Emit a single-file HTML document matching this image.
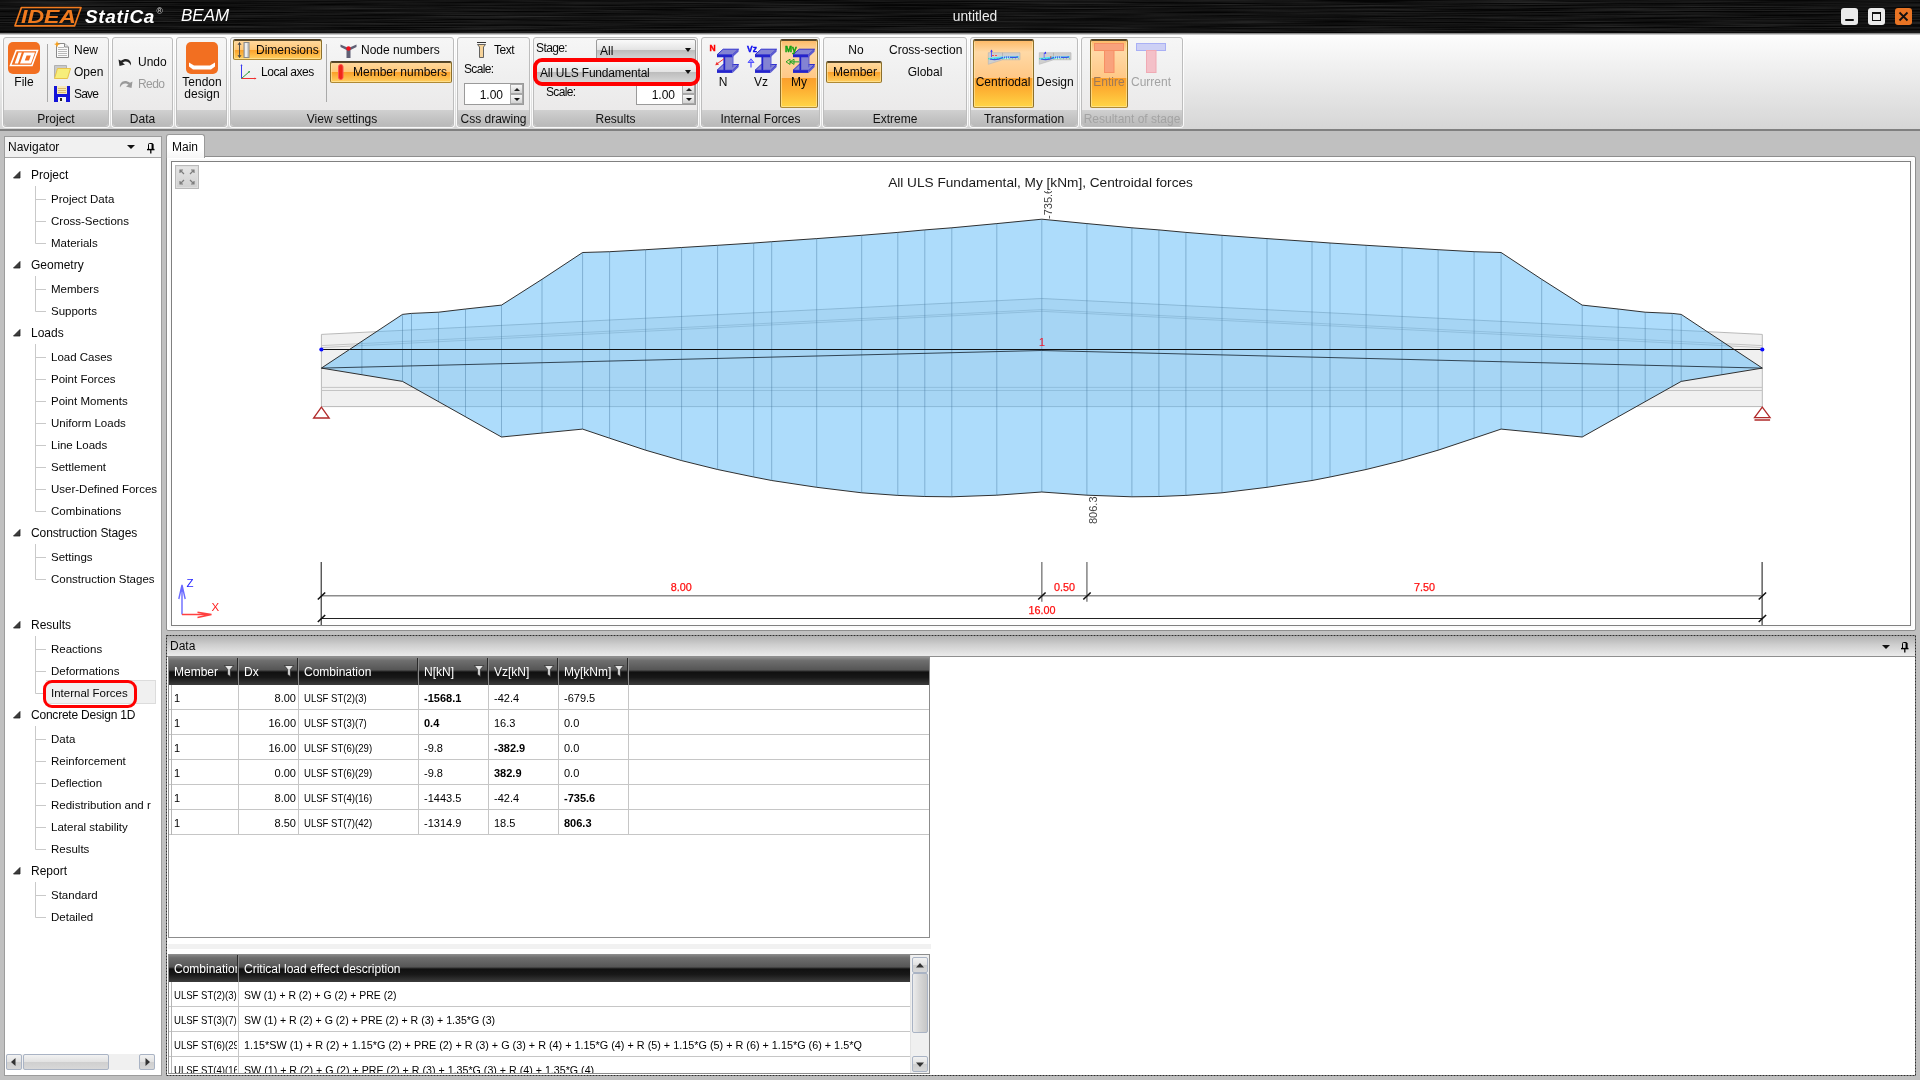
<!DOCTYPE html>
<html lang="en">
<head>
<meta charset="utf-8">
<title>IDEA StatiCa BEAM - untitled</title>
<style>
*{box-sizing:border-box;margin:0;padding:0}
html,body{width:1920px;height:1080px;overflow:hidden}
body{position:relative;background:#c0c0c0;font-family:"Liberation Sans","DejaVu Sans",sans-serif;font-size:12px;color:#080808;line-height:14px}
#root{position:absolute;left:0;top:0;width:1920px;height:1080px;will-change:transform}
.a,.t,.g,.gl,.ob,.sp{position:absolute}
.t{white-space:nowrap;line-height:14px;height:14px}
.c{transform:translateX(-50%)}
svg{position:absolute;overflow:visible}
/* title bar */
#title{position:absolute;left:0;top:0;width:1920px;height:33px;background:#0a0a0a;overflow:hidden}
#ribbon{position:absolute;left:0;top:33px;width:1920px;height:98px;background:linear-gradient(#ffffff 0,#fafafa 8%,#ececec 45%,#dedede 80%,#d6d6d6 100%);border-top:1px solid #8a8a8a;box-shadow:inset 0 1px 0 #c8c8c8;border-bottom:2px solid #808080}
.g{top:37px;height:90px;border:1px solid #bdbdbd;border-radius:3px;background:linear-gradient(#f6f6f6 0,#efefef 45%,#e9e7e7 100%);box-shadow:0 0 0 1px rgba(255,255,255,.85)}
.gl{left:0;right:0;bottom:0;height:16px;padding-top:1px;border-radius:0 0 3px 3px;background:linear-gradient(#d0d0d0,#b9b9b9);text-align:center;font-size:12px;line-height:17px;color:#111;white-space:nowrap}
.ob{border:1px solid;border-color:#4f4126 #8c6f2c #b08a34;border-radius:2px;background:linear-gradient(#ffd9a0 0,#ffc878 50%,#fb9f28 51%,#ffcf60 100%);box-shadow:inset 0 1px 0 #5a4a2a,inset 0 0 0 1px rgba(255,235,170,.6)}
.ob.big{background:linear-gradient(#fdb863 0,#ffd9a6 18%,#ffc886 56%,#fa9f2c 57%,#fdb133 75%,#ffd546 100%)}
.sep{position:absolute;width:1px;background:#a9a9a9}
.combo{position:absolute;border:1px solid #9b9b9b;border-radius:2px;background:linear-gradient(#fafafa 0,#e4e4e4 48%,#bdbdbd 52%,#d9d9d9 100%)}
.arrow{position:absolute;width:0;height:0;border-left:3px solid transparent;border-right:3px solid transparent;border-top:4px solid #111}
.sp{border:1px solid #9a9a9a;background:#fff}
.sb{border:1px solid #a9b3c4;border-radius:2px;background:linear-gradient(#f2f2f2 0,#e2e2e2 48%,#cfcfcf 52%,#d8d8d8 100%)}
.th{background:linear-gradient(#858585 0,#6e6e6e 10%,#565656 44%,#101010 52%,#181818 72%,#3c3c3c 100%)}
.hd{color:#fff}
.nc{font-size:11.500px}
.td{font-size:11px;color:#000}
.sx{transform-origin:0 50%;transform:scaleX(.87)}
.spb{position:absolute;border:1px solid #a8a8a8;background:linear-gradient(#f8f8f8,#d2d2d2)}
</style>
</head>
<body>
<div id="root">
<!-- TITLE BAR -->
<div id="title">
<svg width="1920" height="33" style="left:0;top:0"><defs><filter id="brush" x="0" y="0" width="100%" height="100%"><feTurbulence type="fractalNoise" baseFrequency="0.007 0.8" numOctaves="3" seed="7"/><feColorMatrix type="matrix" values="0 0 0 0 1  0 0 0 0 1  0 0 0 0 1  1.1 0 0 0 -0.3"/></filter></defs><rect width="1920" height="33" fill="#050505"/><rect width="1920" height="33" filter="url(#brush)" opacity=".22"/></svg>
<svg width="70" height="21" viewBox="0 0 70 21" style="left:14px;top:6px"><path d="M7.400 1.500 H67 L60.600 19.800 H1 Z" fill="none" stroke="#f07a1e" stroke-width="1.700" stroke-linejoin="round"/><text x="7" y="17" font-family="Liberation Sans,sans-serif" font-weight="bold" font-style="italic" font-size="17.500" fill="#f07a1e" textLength="55" lengthAdjust="spacingAndGlyphs">IDEA</text></svg>
<span class="t" style="left:85px;top:5.500px;height:22px;line-height:22px;font-size:19px;font-weight:bold;font-style:italic;color:#fff;letter-spacing:.65px">StatiCa</span>
<span class="t" style="left:156.500px;top:7px;font-size:8.500px;line-height:9px;height:9px;color:#ddd">®</span>
<span class="t" style="left:181px;top:6px;height:20px;line-height:20px;font-size:17px;font-style:italic;color:#fff">BEAM</span>
<span class="t c" style="left:975px;top:10px;font-size:13.800px;color:#ededed">untitled</span>
<div class="a" style="left:1841px;top:8px;width:17px;height:17px;border-radius:3px;background:#ebebeb"><div class="a" style="left:4px;top:11px;width:9px;height:2px;background:#111;border-radius:1px"></div></div>
<div class="a" style="left:1868px;top:8px;width:17px;height:17px;border-radius:3px;background:#ebebeb"><div class="a" style="left:4px;top:4px;width:9px;height:9px;border:1px solid #111;border-top-width:2px"></div></div>
<div class="a" style="left:1895px;top:8px;width:17px;height:17px;border-radius:3px;background:#e87424"><svg width="17" height="17" style="left:0;top:0"><path d="M4.5 4.5 L12.5 12.5 M12.5 4.5 L4.5 12.5" stroke="#111" stroke-width="1.8"/></svg></div>
</div>
<!-- RIBBON -->
<div id="ribbon"></div>
<!--RG-START-->
<!-- Project -->
<div class="g" style="left:3px;width:106px"><div class="gl">Project</div></div>
<div class="a" style="left:8px;top:42px;width:32px;height:32px;border-radius:5px;background:#f26f21"><svg width="32" height="32" viewBox="0 0 32 32" style="left:0;top:0"><path d="M8.2 8.5 H29.5 L24 23.5 H2.5 Z" fill="none" stroke="#fff" stroke-width="1.6"/><path d="M10.5 10.5 H13.8 L10 21.5 H6.7 Z" fill="#fff"/><path d="M16 10.500 H27 L23 21.5 H12 Z M18.600 13.500 L16.800 18.500 H21 L22.800 13.500 Z" fill="#fff" fill-rule="evenodd"/></svg></div>
<span class="t c" style="left:24px;top:75px">File</span>
<div class="sep" style="left:47px;top:44px;height:58px"></div>
<svg width="16" height="17" viewBox="0 0 16 17" style="left:54px;top:41px"><path d="M2.5 2.500 H10.500 L14.500 6 V16.500 H2.500 Z" fill="#fbfbfb" stroke="#8a8a8a"/><path d="M10.500 2.500 V6 H14.500" fill="#e8e8e8" stroke="#8a8a8a"/><path d="M4 6.500H10M4 8.500H13M4 10.500H13M4 12.500H13M4 14.500H13" stroke="#b9b9b9"/><path d="M3 0 L4 2.500 L6.500 3 L4 4 L3 6.500 L2 4 L0 3 L2 2.500 Z" fill="#f8a11c"/></svg>
<span class="t" style="left:74px;top:43px">New</span>
<svg width="17" height="14" viewBox="0 0 17 14" style="left:54px;top:65px"><path d="M0.500 0.500 H12.500 V13 H0.500 Z" fill="#c9c9c9" stroke="#b0b0b0"/><path d="M3.500 3.500 H16.500 L13.500 13.500 H0.500 Z" fill="#f7ee7a" stroke="#e8c24a"/></svg>
<span class="t" style="left:74px;top:65px">Open</span>
<svg width="16" height="16" viewBox="0 0 16 16" style="left:54px;top:86px"><path d="M0 0 H16 V16 H0 Z" fill="#1414d8"/><path d="M3 0 H13 V8 H3 Z" fill="#f7e9b8"/><path d="M4 2.500H12M4 4.500H12M4 6.500H12" stroke="#d8b96a"/><path d="M4 11 H12 V16 H4 Z" fill="#f3f3f3"/><path d="M6 12 H8 V15 H6 Z" fill="#222"/></svg>
<span class="t" style="left:74px;top:87px;letter-spacing:-.8px">Save</span>
<!-- Data -->
<div class="g" style="left:112px;width:61px"><div class="gl">Data</div></div>
<svg width="15" height="10" viewBox="0 0 15 10" style="left:118px;top:57px"><path d="M0.500 2.500 L1.500 9 L7 7.500 L4.500 5.800 C7 3.500 11 3.800 13 8.500 C13.800 3 8.500 -0.500 3 3.800 Z" fill="#222"/></svg>
<span class="t" style="left:138px;top:55px">Undo</span>
<svg width="15" height="10" viewBox="0 0 15 10" style="left:118px;top:79px"><path d="M14.500 2.500 L13.500 9 L8 7.500 L10.500 5.800 C8 3.500 4 3.800 2 8.500 C1.200 3 6.500 -0.500 12 3.800 Z" fill="#9a9a9a"/></svg>
<span class="t" style="left:138px;top:77px;color:#9b9b9b;letter-spacing:-.55px">Redo</span>
<!-- Tendon -->
<div class="g" style="left:176px;width:51px"><div class="gl"></div></div>
<div class="a" style="left:186px;top:42px;width:32px;height:32px;border-radius:5px;background:#f26f21"><svg width="32" height="32" viewBox="0 0 32 32" style="left:0;top:0"><path d="M3 20.500 L8 23.500 H24 L29 20.500 L29 24.500 L25 27.500 H7 L3 24.500 Z" fill="#fff"/></svg></div>
<span class="t c" style="left:202px;top:75px">Tendon</span>
<span class="t c" style="left:202px;top:87px">design</span>
<!-- View settings -->
<div class="g" style="left:230px;width:224px"><div class="gl">View settings</div></div>
<div class="ob" style="left:233px;top:39px;width:89px;height:21px"></div>
<svg width="16" height="16" viewBox="0 0 16 16" style="left:238px;top:42px"><path d="M1.500 1 V15 M0 3 L1.500 0.500 L3 3 M0 13 L1.500 15.500 L3 13" stroke="#444" fill="none" stroke-width=".9"/><rect x="6" y="0.500" width="5" height="15" fill="#cfcfcf" stroke="#8c8c8c"/><rect x="7" y="1" width="2" height="14" fill="#eee"/></svg>
<span class="t" style="left:256px;top:43px">Dimensions</span>
<svg width="17" height="16" viewBox="0 0 17 16" style="left:240px;top:64px"><path d="M1.500 1 V14.500" stroke="#3a3af0" stroke-width="1"/><path d="M1.500 14.500 H16" stroke="#f03030" stroke-width="1"/><path d="M1.500 14.500 L9.500 7.500" stroke="#2a9a3a" stroke-width="1"/><path d="M0.500 2 L1.500 0 L2.500 2Z" fill="#3a3af0"/><path d="M14.500 13.500 L16.500 14.500 L14.500 15.500Z" fill="#f03030"/><path d="M8 7.500 L10 7 L9.500 9Z" fill="#2a9a3a"/></svg>
<span class="t" style="left:261px;top:65px;letter-spacing:-.45px">Local axes</span>
<div class="sep" style="left:326px;top:44px;height:58px"></div>
<svg width="17" height="14" viewBox="0 0 17 14" style="left:340px;top:44px"><path d="M0.500 0.500 L8.500 4 L16.500 0.500 V3 L10.500 6 V14 H6.500 V6 L0.500 3 Z" fill="#5f5f74"/><circle cx="8.500" cy="4.500" r="2.200" fill="#f0101a"/></svg>
<span class="t" style="left:361px;top:43px">Node numbers</span>
<div class="ob" style="left:330px;top:61px;width:122px;height:22px"></div>
<svg width="6" height="16" viewBox="0 0 6 16" style="left:338px;top:64px"><rect x="0.500" y="0.500" width="4.500" height="15" rx="2.200" fill="#f02818" stroke="#f55"/></svg>
<span class="t" style="left:353px;top:65px">Member numbers</span>
<!-- Css drawing -->
<div class="g" style="left:457px;width:73px"><div class="gl">Css drawing</div></div>
<svg width="9" height="16" viewBox="0 0 9 16" style="left:477px;top:42px"><path d="M0 0.500 H9" stroke="#333" stroke-width="1"/><path d="M0.500 2.500 H8.500 L6.500 5 V15.500 H2.500 V5 Z" fill="#f6d39a" stroke="#555" stroke-width=".9"/></svg>
<span class="t" style="left:494px;top:43px;letter-spacing:-.5px">Text</span>
<span class="t" style="left:464px;top:62px;letter-spacing:-.65px">Scale:</span>
<div class="sp" style="left:464px;top:83px;width:60px;height:22px"></div>
<span class="t" style="left:464px;top:88px;width:39px;text-align:right">1.00</span>
<div class="spb" style="left:510px;top:84px;width:13px;height:10px"><div class="arrow" style="left:3px;top:3px;border-top:none;border-bottom:3.500px solid #222;border-left-width:3px;border-right-width:3px;margin-left:-.5px"></div></div>
<div class="spb" style="left:510px;top:94px;width:13px;height:10px"><div class="arrow" style="left:2.500px;top:3px;border-top-width:3.500px;border-left-width:3px;border-right-width:3px"></div></div>
<!-- Results -->
<div class="g" style="left:533px;width:165px"><div class="gl">Results</div></div>
<span class="t" style="left:536px;top:41px;letter-spacing:-.6px">Stage:</span>
<div class="combo" style="left:596px;top:39px;width:100px;height:22px"></div>
<span class="t" style="left:600px;top:44px">All</span>
<div class="arrow" style="left:685px;top:48px"></div>
<span class="t" style="left:546px;top:85px;letter-spacing:-.65px">Scale:</span>
<div class="sp" style="left:636px;top:83px;width:60px;height:22px"></div>
<span class="t" style="left:636px;top:88px;width:39px;text-align:right">1.00</span>
<div class="spb" style="left:682px;top:84px;width:13px;height:10px"><div class="arrow" style="left:3px;top:3px;border-top:none;border-bottom:3.500px solid #222;border-left-width:3px;border-right-width:3px;margin-left:-.5px"></div></div>
<div class="spb" style="left:682px;top:94px;width:13px;height:10px"><div class="arrow" style="left:2.500px;top:3px;border-top-width:3.500px;border-left-width:3px;border-right-width:3px"></div></div>
<div class="combo" style="left:535px;top:60px;width:162px;height:24px;border-color:#c4c4c4;border-radius:5px"></div>
<div class="a" style="left:533px;top:58px;width:166.500px;height:27.800px;border:4px solid #f00;border-radius:9px"></div>
<span class="t" style="left:540px;top:66px;letter-spacing:-.2px">All ULS Fundamental</span>
<div class="arrow" style="left:685px;top:70px"></div>
<!-- Internal forces -->
<div class="g" style="left:701px;width:119px"><div class="gl">Internal Forces</div></div>
<div class="ob big" style="left:780px;top:39px;width:38px;height:69px"></div>
<svg width="22" height="24" viewBox="0 0 22 24" style="left:717.1px;top:48.9px"><polygon points="6.14,15.50 21.64,15.50 15.50,21.32 0.00,21.32" fill="#8383d3" stroke="#2323cc" stroke-width=".9" stroke-linejoin="round"/><polygon points="0.00,21.32 15.50,21.32 15.50,23.90 0.00,23.90" fill="#2323cc"/><polygon points="21.64,15.50 21.64,17.96 15.50,23.90 15.50,21.32" fill="#5a5ad0"/><polygon points="6.78,7.75 15.18,7.75 15.18,18.73 6.78,20.99" fill="#8383d3"/><polygon points="6.46,7.75 8.20,7.75 8.20,21.19 6.46,21.19" fill="#2323cc"/><polygon points="15.18,7.75 16.47,6.46 16.47,17.44 15.18,18.73" fill="#5a5ad0"/><polygon points="6.14,0.19 21.64,0.19 15.50,5.81 0.00,5.81" fill="#8383d3" stroke="#2323cc" stroke-width=".9" stroke-linejoin="round"/><polygon points="0.00,5.81 15.50,5.81 15.50,8.27 0.00,8.27" fill="#2323cc"/><polygon points="21.64,0.19 21.64,2.45 15.50,8.27 15.50,5.81" fill="#5a5ad0"/></svg>
<svg width="22" height="24" viewBox="0 0 22 24" style="left:755.2px;top:48.9px"><polygon points="6.14,15.50 21.64,15.50 15.50,21.32 0.00,21.32" fill="#8383d3" stroke="#2323cc" stroke-width=".9" stroke-linejoin="round"/><polygon points="0.00,21.32 15.50,21.32 15.50,23.90 0.00,23.90" fill="#2323cc"/><polygon points="21.64,15.50 21.64,17.96 15.50,23.90 15.50,21.32" fill="#5a5ad0"/><polygon points="6.78,7.75 15.18,7.75 15.18,18.73 6.78,20.99" fill="#8383d3"/><polygon points="6.46,7.75 8.20,7.75 8.20,21.19 6.46,21.19" fill="#2323cc"/><polygon points="15.18,7.75 16.47,6.46 16.47,17.44 15.18,18.73" fill="#5a5ad0"/><polygon points="6.14,0.19 21.64,0.19 15.50,5.81 0.00,5.81" fill="#8383d3" stroke="#2323cc" stroke-width=".9" stroke-linejoin="round"/><polygon points="0.00,5.81 15.50,5.81 15.50,8.27 0.00,8.27" fill="#2323cc"/><polygon points="21.64,0.19 21.64,2.45 15.50,8.27 15.50,5.81" fill="#5a5ad0"/></svg>
<svg width="22" height="24" viewBox="0 0 22 24" style="left:793.3px;top:48.9px"><polygon points="6.14,15.50 21.64,15.50 15.50,21.32 0.00,21.32" fill="#8383d3" stroke="#2323cc" stroke-width=".9" stroke-linejoin="round"/><polygon points="0.00,21.32 15.50,21.32 15.50,23.90 0.00,23.90" fill="#2323cc"/><polygon points="21.64,15.50 21.64,17.96 15.50,23.90 15.50,21.32" fill="#5a5ad0"/><polygon points="6.78,7.75 15.18,7.75 15.18,18.73 6.78,20.99" fill="#8383d3"/><polygon points="6.46,7.75 8.20,7.75 8.20,21.19 6.46,21.19" fill="#2323cc"/><polygon points="15.18,7.75 16.47,6.46 16.47,17.44 15.18,18.73" fill="#5a5ad0"/><polygon points="6.14,0.19 21.64,0.19 15.50,5.81 0.00,5.81" fill="#8383d3" stroke="#2323cc" stroke-width=".9" stroke-linejoin="round"/><polygon points="0.00,5.81 15.50,5.81 15.50,8.27 0.00,8.27" fill="#2323cc"/><polygon points="21.64,0.19 21.64,2.45 15.50,8.27 15.50,5.81" fill="#5a5ad0"/></svg>
<span class="t" style="left:709.500px;top:41px;font-size:8.500px;font-weight:bold;color:#f00;-webkit-text-stroke:.4px #f00">N</span>
<span class="t" style="left:747px;top:41.500px;font-size:8.500px;font-weight:bold;color:#1010ee;-webkit-text-stroke:.4px #1010ee">Vz</span>
<span class="t" style="left:785px;top:41.500px;font-size:8.500px;font-weight:bold;color:#12a012;-webkit-text-stroke:.4px #12a012">My</span>
<svg width="12" height="10" viewBox="0 0 12 10" style="left:714px;top:57px"><path d="M10 1.800 L2.500 7.200" stroke="#f03030" stroke-width="1"/><path d="M1.200 8.200 L5 7.800 L2.800 4.800 Z" fill="#f03030"/></svg>
<svg width="8" height="10" viewBox="0 0 8 10" style="left:747px;top:58px"><path d="M4 9.500 V3" stroke="#4a4aff" stroke-width="1.200"/><path d="M1 4.500 L4 0.800 L7 4.500 Z" fill="#9a9aff" stroke="#4a4aff" stroke-width=".9"/></svg>
<svg width="16" height="8" viewBox="0 0 16 8" style="left:785px;top:58px"><path d="M5 3.800 H14.500" stroke="#6ab85a" stroke-width="1.600"/><path d="M1 3.800 L5 1.200 V6.400 Z M5 3.800 L9 1.200 V6.400 Z" fill="none" stroke="#18a018" stroke-width=".9"/></svg>
<span class="t c" style="left:723px;top:75px">N</span>
<span class="t c" style="left:761px;top:75px">Vz</span>
<span class="t c" style="left:799px;top:75px">My</span>
<!-- Extreme -->
<div class="g" style="left:823px;width:144px"><div class="gl">Extreme</div></div>
<span class="t c" style="left:856px;top:43px">No</span>
<span class="t" style="left:889px;top:43px">Cross-section</span>
<div class="ob" style="left:826px;top:61px;width:56px;height:22px"></div>
<span class="t c" style="left:855px;top:65px">Member</span>
<span class="t c" style="left:925px;top:65px">Global</span>
<!-- Transformation -->
<div class="g" style="left:970px;width:108px"><div class="gl">Transformation</div></div>
<div class="ob big" style="left:973px;top:39px;width:61px;height:69px"></div>
<svg width="33" height="15" viewBox="0 0 33 15" style="left:987.8px;top:49.9px"><polygon points="0.3,2.700 32,2.700 32,9.800 14.500,9.800 0.300,14.300" fill="#cfcfcf" stroke="#b4b4b4" stroke-width=".6"/><path d="M14.500 2.700 V9.800" stroke="#a9a9a9" stroke-width=".7"/><polygon points="0.5,8 14,6.500 31,6.200 31,7.600 14,9 0.500,9.500" fill="#4fe6f2"/><path d="M2 9 C7 10.500 12 9 15 7.500 S24 8.500 30 6.800" stroke="#3a52e8" stroke-width="1.300" fill="none"/><path d="M15.500 6.300 V9 M17.500 6.300 V9 M19.500 6.300 V9 M21.500 6.300 V9" stroke="#e8ffff" stroke-width=".6"/><path d="M0 8.700 H32" stroke="#35c060" stroke-width=".5" stroke-dasharray="1 2"/></svg>
<svg width="10" height="9" viewBox="0 0 10 9" style="left:989px;top:48.500px"><path d="M2.500 8 V1.500" stroke="#3838ff" stroke-width=".8"/><path d="M1.200 2.800 L2.500 0.500 L3.800 2.800Z" fill="#3838ff"/><path d="M3 6.500 H9" stroke="#ff3030" stroke-width=".8" stroke-dasharray="2 1"/></svg>
<svg width="33" height="15" viewBox="0 0 33 15" style="left:1038.8px;top:49.9px"><polygon points="0.3,2.700 32,2.700 32,9.800 14.500,9.800 0.300,14.300" fill="#cfcfcf" stroke="#b4b4b4" stroke-width=".6"/><path d="M14.500 2.700 V9.800" stroke="#a9a9a9" stroke-width=".7"/><polygon points="0.5,8 14,6.500 31,6.200 31,7.600 14,9 0.500,9.500" fill="#4fe6f2"/><path d="M2 9 C7 10.500 12 9 15 7.500 S24 8.500 30 6.800" stroke="#3a52e8" stroke-width="1.300" fill="none"/><path d="M15.500 6.300 V9 M17.500 6.300 V9 M19.500 6.300 V9 M21.500 6.300 V9" stroke="#e8ffff" stroke-width=".6"/><path d="M0 8.700 H32" stroke="#35c060" stroke-width=".5" stroke-dasharray="1 2"/></svg>
<svg width="14" height="9" viewBox="0 0 14 9" style="left:1041px;top:51px"><path d="M3.200 7 V2" stroke="#5a5aff" stroke-width=".7"/><path d="M2.800 2.500 L4.700 0.500 L5.200 2.800Z" fill="#2020ff"/><path d="M9 5.500 L10.500 5.500 L9.800 7.500Z" fill="#e02020"/></svg>
<span class="t c" style="left:1003px;top:75px">Centriodal</span>
<span class="t c" style="left:1055px;top:75px">Design</span>
<!-- Resultant -->
<div class="g" style="left:1081px;width:102px"><div class="gl" style="color:#a3a3a3">Resultant of stage</div></div>
<div class="ob big" style="left:1090px;top:39px;width:38px;height:69px"></div>
<svg width="30" height="30" viewBox="0 0 30 30" style="left:1094px;top:43px"><rect x="0.500" y="0.500" width="29" height="7" fill="#f9a27c" stroke="#f78f64"/><rect x="10.500" y="7.500" width="9.500" height="22" fill="#f9a27c" stroke="#f78f64"/></svg>
<svg width="30" height="30" viewBox="0 0 30 30" style="left:1136px;top:43px"><rect x="0.500" y="0.500" width="29" height="7" fill="#cdd0f5" stroke="#a9b0f5"/><rect x="10.500" y="7.500" width="9.500" height="22" fill="#f4c0c8" stroke="#f0aab4"/></svg>
<span class="t c" style="left:1109px;top:75px;color:#9d7a5a">Entire</span>
<span class="t c" style="left:1151px;top:75px;color:#a3a3a3">Current</span>
<!--RG-END-->
<!--NAV-START-->
<!-- NAVIGATOR -->
<div class="a" style="left:4px;top:136px;width:158px;height:940px;border:1px solid #9c9c9c;background:#fff"></div>
<div class="a" style="left:5px;top:137px;width:156px;height:21px;background:#f1f1f1;border-bottom:1px solid #a6a6a6"></div>
<span class="t" style="left:8px;top:140px">Navigator</span>
<div class="arrow" style="left:127px;top:145px;border-left-width:4px;border-right-width:4px;border-top-width:4.500px"></div>
<svg width="8" height="11" viewBox="0 0 8 11" style="left:146.500px;top:142.500px"><path d="M1.500 6 V1.500 Q1.500 0.500 2.500 0.500 H5 Q6 0.500 6 1.500 V6" fill="none" stroke="#000" stroke-width="1"/><path d="M5.400 1 V6" stroke="#000" stroke-width="1.700"/><path d="M0 6.600 H7.500" stroke="#000" stroke-width="1.400"/><path d="M3.800 7 V10.500" stroke="#000" stroke-width="1.300"/></svg>
<div class="a" style="left:46px;top:680px;width:110px;height:24px;background:#f0f0f0;border:1px solid #dcdcdc;border-left:none"></div>
<svg width="160" height="940" viewBox="0 0 160 940" style="left:0;top:0" fill="none" stroke="#c9c9c9" stroke-width="1"><path d="M35.500 186 V243.500 H46"/><path d="M35.500 199.500 H46"/><path d="M35.500 221.500 H46"/><path d="M35.500 276 V311.500 H46"/><path d="M35.500 289.500 H46"/><path d="M35.500 344 V511.500 H46"/><path d="M35.500 357.500 H46"/><path d="M35.500 379.500 H46"/><path d="M35.500 401.500 H46"/><path d="M35.500 423.500 H46"/><path d="M35.500 445.500 H46"/><path d="M35.500 467.500 H46"/><path d="M35.500 489.500 H46"/><path d="M35.500 544 V579.500 H46"/><path d="M35.500 557.500 H46"/><path d="M35.500 636 V693.500 H46"/><path d="M35.500 649.500 H46"/><path d="M35.500 671.500 H46"/><path d="M35.500 726 V849.500 H46"/><path d="M35.500 739.500 H46"/><path d="M35.500 761.500 H46"/><path d="M35.500 783.500 H46"/><path d="M35.500 805.500 H46"/><path d="M35.500 827.500 H46"/><path d="M35.500 882 V917.500 H46"/><path d="M35.500 895.500 H46"/></svg>
<svg width="8" height="8" viewBox="0 0 8 8" style="left:13px;top:171px"><path d="M7 0.500 V7 H0.500 Z" fill="#3c3c3c" stroke="#222" stroke-width=".8"/></svg>
<span class="t" style="left:31px;top:168px">Project</span>
<span class="t nc" style="left:51px;top:192px">Project Data</span>
<span class="t nc" style="left:51px;top:214px">Cross-Sections</span>
<span class="t nc" style="left:51px;top:236px">Materials</span>
<svg width="8" height="8" viewBox="0 0 8 8" style="left:13px;top:261px"><path d="M7 0.500 V7 H0.500 Z" fill="#3c3c3c" stroke="#222" stroke-width=".8"/></svg>
<span class="t" style="left:31px;top:258px">Geometry</span>
<span class="t nc" style="left:51px;top:282px">Members</span>
<span class="t nc" style="left:51px;top:304px">Supports</span>
<svg width="8" height="8" viewBox="0 0 8 8" style="left:13px;top:329px"><path d="M7 0.500 V7 H0.500 Z" fill="#3c3c3c" stroke="#222" stroke-width=".8"/></svg>
<span class="t" style="left:31px;top:326px">Loads</span>
<span class="t nc" style="left:51px;top:350px">Load Cases</span>
<span class="t nc" style="left:51px;top:372px">Point Forces</span>
<span class="t nc" style="left:51px;top:394px">Point Moments</span>
<span class="t nc" style="left:51px;top:416px">Uniform Loads</span>
<span class="t nc" style="left:51px;top:438px">Line Loads</span>
<span class="t nc" style="left:51px;top:460px">Settlement</span>
<span class="t nc" style="left:51px;top:482px">User-Defined Forces</span>
<span class="t nc" style="left:51px;top:504px">Combinations</span>
<svg width="8" height="8" viewBox="0 0 8 8" style="left:13px;top:529px"><path d="M7 0.500 V7 H0.500 Z" fill="#3c3c3c" stroke="#222" stroke-width=".8"/></svg>
<span class="t" style="left:31px;top:526px;letter-spacing:-.1px">Construction Stages</span>
<span class="t nc" style="left:51px;top:550px">Settings</span>
<span class="t nc" style="left:51px;top:572px">Construction Stages</span>
<svg width="8" height="8" viewBox="0 0 8 8" style="left:13px;top:621px"><path d="M7 0.500 V7 H0.500 Z" fill="#3c3c3c" stroke="#222" stroke-width=".8"/></svg>
<span class="t" style="left:31px;top:618px">Results</span>
<span class="t nc" style="left:51px;top:642px">Reactions</span>
<span class="t nc" style="left:51px;top:664px">Deformations</span>
<span class="t nc" style="left:51px;top:686px">Internal Forces</span>
<svg width="8" height="8" viewBox="0 0 8 8" style="left:13px;top:711px"><path d="M7 0.500 V7 H0.500 Z" fill="#3c3c3c" stroke="#222" stroke-width=".8"/></svg>
<span class="t" style="left:31px;top:708px;letter-spacing:-.22px">Concrete Design 1D</span>
<span class="t nc" style="left:51px;top:732px">Data</span>
<span class="t nc" style="left:51px;top:754px">Reinforcement</span>
<span class="t nc" style="left:51px;top:776px">Deflection</span>
<span class="t nc" style="left:51px;top:798px">Redistribution and r</span>
<span class="t nc" style="left:51px;top:820px">Lateral stability</span>
<span class="t nc" style="left:51px;top:842px">Results</span>
<svg width="8" height="8" viewBox="0 0 8 8" style="left:13px;top:867px"><path d="M7 0.500 V7 H0.500 Z" fill="#3c3c3c" stroke="#222" stroke-width=".8"/></svg>
<span class="t" style="left:31px;top:864px">Report</span>
<span class="t nc" style="left:51px;top:888px">Standard</span>
<span class="t nc" style="left:51px;top:910px">Detailed</span>
<div class="a" style="left:43px;top:679.500px;width:93.500px;height:28.500px;border:3.800px solid #f00;border-radius:9px"></div>
<div class="a" style="left:155px;top:796px;width:6px;height:18px;background:#fff"></div>
<div class="a" style="left:6px;top:1054px;width:149px;height:16px;background:#f0f0f0"></div>
<div class="a sb" style="left:6px;top:1054px;width:16px;height:16px"></div><div class="a sb" style="left:139px;top:1054px;width:16px;height:16px"></div><div class="a sb" style="left:23px;top:1054px;width:86px;height:16px"></div>
<svg width="5" height="8" viewBox="0 0 5 8" style="left:11px;top:1058px"><path d="M4.500 0 V8 L0 4 Z" fill="#333"/></svg><svg width="5" height="8" viewBox="0 0 5 8" style="left:145px;top:1058px"><path d="M0.500 0 V8 L5 4 Z" fill="#333"/></svg>
<!--NAV-END-->
<!--MAIN-START-->
<!-- MAIN PANEL -->
<div class="a" style="left:166px;top:134px;width:39px;height:24px;background:linear-gradient(#fff 60%,#f6f6f6);border:1px solid #9a9a9a;border-bottom:none;border-radius:3px 3px 0 0;z-index:2"></div>
<span class="t" style="left:172px;top:140px;z-index:3">Main</span>
<div class="a" style="left:166px;top:156px;width:1750px;height:475px;background:#fafafa;border:1px solid #8e8e8e;border-radius:2px;box-shadow:inset 0 0 0 2px #fff"></div>
<div class="a" id="canvas" style="left:171px;top:161px;width:1740px;height:465px;background:#fff;border:1px solid #808080"></div>
<div class="a" style="left:175px;top:165px;width:24px;height:24px;background:linear-gradient(#e6e6e6,#d0d0d0);border:1px solid #b9b9b9;box-shadow:inset 0 0 0 1px #dedede"></div>
<svg width="24" height="24" viewBox="0 0 24 24" style="left:175px;top:165px" stroke="#7d7d7d" stroke-width="1.2" fill="#7d7d7d"><path d="M9 9 L5.500 5.500 M5 8 V5 H8" fill="none"/><path d="M15 9 L18.500 5.500 M16 5 H19 V8" fill="none"/><path d="M9 15 L5.500 18.500 M5 16 V19 H8" fill="none"/><path d="M15 15 L18.500 18.500 M16 19 H19 V16" fill="none"/></svg>
<!--DG-START-->
<svg width="1920" height="1080" viewBox="0 0 1920 1080" style="left:0;top:0;pointer-events:none" font-family="Liberation Sans,sans-serif">
<defs><clipPath id="cv"><rect x="172" y="162" width="1738" height="463"/></clipPath><clipPath id="c1"><rect x="1040" y="191" width="16" height="30"/></clipPath><clipPath id="c2"><rect x="1084" y="496.5" width="16" height="30"/></clipPath></defs>
<g clip-path="url(#cv)">
<text x="1040.5" y="187" text-anchor="middle" font-size="13.65" fill="#1a1a1a">All ULS Fundamental, My [kNm], Centroidal forces</text>
<path d="M321.4 334.4 L1041.8 298.5 L1762.3 334.4 V406.6 H321.4 Z" fill="#f0f0f0" stroke="#b9b9b9" stroke-width="1"/>
<path d="M321.4 345.6 L1041.8 309.6 L1762.3 345.6 M321.4 347.6 L1041.8 311.3 L1762.3 347.6 M321.4 387.4 H1762.3 M321.4 390.5 H1762.3" fill="none" stroke="#c4c4c4" stroke-width="1"/>
<polygon points="321.4,368.1 402.5,314.4 411.5,313.4 438.5,312.2 465.5,309.0 501.5,305.1 542.0,279.3 582.6,252.5 609.6,251.7 645.6,249.7 681.6,247.5 717.6,245.3 753.7,243.0 771.7,241.7 816.7,238.6 861.7,235.3 897.8,232.4 924.8,229.9 951.8,227.8 996.8,223.6 1041.8,219.2 1086.9,223.6 1131.9,227.8 1158.9,229.9 1185.9,232.4 1222.0,235.3 1267.0,238.6 1312.0,241.7 1330.0,243.0 1366.1,245.3 1402.1,247.5 1438.1,249.7 1474.1,251.7 1501.1,252.5 1541.7,279.3 1582.2,305.1 1618.2,309.0 1645.2,312.2 1672.2,313.4 1681.2,314.4 1762.3,368.1 1681.2,381.4 1582.2,437.0 1501.1,429.1 1474.1,438.2 1438.1,450.2 1402.1,460.6 1366.1,469.5 1330.0,477.0 1312.0,480.5 1267.0,487.3 1222.0,492.8 1185.9,495.4 1158.9,496.5 1131.9,496.8 1086.9,495.2 1041.8,492.0 996.8,495.2 951.8,496.8 924.8,496.5 897.8,495.4 861.7,492.8 816.7,487.3 771.7,480.5 753.7,477.0 717.6,469.5 681.6,460.6 645.6,450.2 609.6,438.2 582.6,429.1 501.5,437.0 402.5,381.4" fill="#5cbaf8" fill-opacity=".5" stroke="none"/>
<path d="M361.9 341.2 V374.8M402.5 314.4 V381.4M411.5 313.4 V386.5M438.5 312.2 V401.6M465.5 309.0 V416.8M501.5 305.1 V437.0M542.0 279.3 V433.1M582.6 252.5 V429.1M609.6 251.7 V438.2M645.6 249.7 V450.2M681.6 247.5 V460.6M717.6 245.3 V469.5M753.7 243.0 V477.0M771.7 241.7 V480.5M816.7 238.6 V487.3M861.7 235.3 V492.8M897.8 232.4 V495.4M924.8 229.9 V496.5M951.8 227.8 V496.8M996.8 223.6 V495.2M1041.8 219.2 V492.0M1086.9 223.6 V495.2M1131.9 227.8 V496.8M1158.9 229.9 V496.5M1185.9 232.4 V495.4M1222.0 235.3 V492.8M1267.0 238.6 V487.3M1312.0 241.7 V480.5M1330.0 243.0 V477.0M1366.1 245.3 V469.5M1402.1 247.5 V460.6M1438.1 249.7 V450.2M1474.1 251.7 V438.2M1501.1 252.5 V429.1M1541.7 279.3 V433.1M1582.2 305.1 V437.0M1618.2 309.0 V416.8M1645.2 312.2 V401.6M1672.2 313.4 V386.5M1681.2 314.4 V381.4M1721.8 341.3 V374.8" stroke="#3d6f96" stroke-opacity=".4" stroke-width="1" fill="none"/>
<path d="M321.4 368.1 L1041.8 350.5 L1762.3 368.1" stroke="#1c2b38" stroke-width="1" fill="none" stroke-opacity=".85"/>
<polygon points="321.4,368.1 402.5,314.4 411.5,313.4 438.5,312.2 465.5,309.0 501.5,305.1 542.0,279.3 582.6,252.5 609.6,251.7 645.6,249.7 681.6,247.5 717.6,245.3 753.7,243.0 771.7,241.7 816.7,238.6 861.7,235.3 897.8,232.4 924.8,229.9 951.8,227.8 996.8,223.6 1041.8,219.2 1086.9,223.6 1131.9,227.8 1158.9,229.9 1185.9,232.4 1222.0,235.3 1267.0,238.6 1312.0,241.7 1330.0,243.0 1366.1,245.3 1402.1,247.5 1438.1,249.7 1474.1,251.7 1501.1,252.5 1541.7,279.3 1582.2,305.1 1618.2,309.0 1645.2,312.2 1672.2,313.4 1681.2,314.4 1762.3,368.1 1681.2,381.4 1582.2,437.0 1501.1,429.1 1474.1,438.2 1438.1,450.2 1402.1,460.6 1366.1,469.5 1330.0,477.0 1312.0,480.5 1267.0,487.3 1222.0,492.8 1185.9,495.4 1158.9,496.5 1131.9,496.8 1086.9,495.2 1041.8,492.0 996.8,495.2 951.8,496.8 924.8,496.5 897.8,495.4 861.7,492.8 816.7,487.3 771.7,480.5 753.7,477.0 717.6,469.5 681.6,460.6 645.6,450.2 609.6,438.2 582.6,429.1 501.5,437.0 402.5,381.4" fill="none" stroke="#262626" stroke-width=".95" stroke-linejoin="round"/>
<path d="M321.4 349.5 H1762.3" stroke="#111" stroke-width="1.2"/>
<circle cx="321.4" cy="349.5" r="2.1" fill="#0a0aff"/><circle cx="1762.3" cy="349.5" r="2.1" fill="#0a0aff"/>
<path d="M321.4 407.2 L329.2 418 H313.6 Z" fill="none" stroke="#b02a2a" stroke-width="1.3"/>
<path d="M1762.3 407.2 L1770.1 417.6 H1754.5 Z M1754.5 420 H1770.1" fill="none" stroke="#b02a2a" stroke-width="1.3"/>
<text x="1042" y="346" text-anchor="middle" font-size="11.5" fill="#ee1b2e">1</text>
<g clip-path="url(#c1)"><text transform="translate(1052.3 219) rotate(-90)" font-size="11" fill="#444">-735.6</text></g>
<g clip-path="url(#c2)"><text transform="translate(1097.3 524) rotate(-90)" font-size="11" fill="#444">806.3</text></g>
<path d="M321.2 562 V626 M1762.1 562 V626" stroke="#111" stroke-width="1"/>
<path d="M321.4 595.8 H1762.3 M1041.8 562 V601.7 M1086.9 562 V601.7" stroke="#8c8c8c" stroke-width="1.6" fill="none"/>
<path d="M321.4 618.5 H1762.3" stroke="#222" stroke-width="1"/>
<path d="M317.8 599.5 L325.2 592.5M1038.2 599.5 L1045.6 592.5M1083.3 599.5 L1090.7 592.5M1758.7 599.5 L1766.1 592.5M317.8 622.0 L325.2 615.0M1758.7 622.0 L1766.1 615.0" stroke="#111" stroke-width="1.6" fill="none"/>
<text x="681.3" y="591.0" text-anchor="middle" font-size="10.8" fill="#ff1010" stroke="#ff1010" stroke-width=".25">8.00</text>
<text x="1064.4" y="591.0" text-anchor="middle" font-size="10.8" fill="#ff1010" stroke="#ff1010" stroke-width=".25">0.50</text>
<text x="1424.5" y="591.0" text-anchor="middle" font-size="10.8" fill="#ff1010" stroke="#ff1010" stroke-width=".25">7.50</text>
<text x="1042.0" y="613.8" text-anchor="middle" font-size="10.8" fill="#ff1010" stroke="#ff1010" stroke-width=".25">16.00</text>
<path d="M182 614.5 V586 M178.800 599 L182 585 L185.200 599" stroke="#6a6aff" stroke-width="1.4" fill="none"/>
<path d="M182 614.5 H211 M197.500 612.300 L211.500 614.500 L197.500 617.500" stroke="#ff4040" stroke-width="1.4" fill="none"/>
<text x="186.500" y="586.800" font-size="11.5" fill="#2020ff">Z</text><text x="211.500" y="611.300" font-size="11.5" fill="#ff2020">X</text>
</g></svg>
<!--DG-END-->
<!--MAIN-END-->
<!--DATA-START-->
<!-- DATA PANEL -->
<div class="a" style="left:167px;top:636px;width:1748px;height:439px;background:#fff"></div>
<svg width="1750" height="441" style="left:166px;top:635px"><rect x="0.5" y="0.5" width="1749" height="440" fill="none" stroke="#2e2e2e" stroke-width="1" stroke-dasharray="2 1"/></svg>
<div class="a" style="left:167px;top:636px;width:1748px;height:21px;background:linear-gradient(#b1b1b1 0,#cfcfcf 45%,#ebebeb 100%);border-bottom:1px solid #8f8f8f"></div>
<span class="t" style="left:170px;top:639px">Data</span>
<div class="arrow" style="left:1881.500px;top:644.500px;border-left-width:4px;border-right-width:4px;border-top-width:4.500px"></div>
<svg width="8" height="11" viewBox="0 0 8 11" style="left:1900.500px;top:642px"><path d="M1.500 6 V1.500 Q1.500 0.500 2.500 0.500 H5 Q6 0.500 6 1.500 V6" fill="none" stroke="#000" stroke-width="1"/><path d="M5.400 1 V6" stroke="#000" stroke-width="1.700"/><path d="M0 6.600 H7.500" stroke="#000" stroke-width="1.400"/><path d="M3.800 7 V10.500" stroke="#000" stroke-width="1.300"/></svg>
<div class="a" style="left:168px;top:657px;width:762px;height:281px;border:1px solid #8c8c8c;background:#fff"></div>
<div class="a th" style="left:169px;top:658px;width:760px;height:27px"></div>
<span class="t hd" style="left:174px;top:665px">Member</span>
<span class="t hd" style="left:244px;top:665px">Dx</span>
<span class="t hd" style="left:304px;top:665px">Combination</span>
<span class="t hd" style="left:424px;top:665px">N[kN]</span>
<span class="t hd" style="left:494px;top:665px">Vz[kN]</span>
<span class="t hd" style="left:564px;top:665px">My[kNm]</span>
<svg width="10" height="12" viewBox="0 0 10 12" style="left:224px;top:665px"><path d="M0.300 0.500 H9.700 L6.300 4.500 V11.500 L3.700 9.500 V4.500 Z" fill="#e8e8e8" stroke="#222" stroke-width=".7"/></svg>
<svg width="10" height="12" viewBox="0 0 10 12" style="left:284px;top:665px"><path d="M0.300 0.500 H9.700 L6.300 4.500 V11.500 L3.700 9.500 V4.500 Z" fill="#e8e8e8" stroke="#222" stroke-width=".7"/></svg>
<svg width="10" height="12" viewBox="0 0 10 12" style="left:474px;top:665px"><path d="M0.300 0.500 H9.700 L6.300 4.500 V11.500 L3.700 9.500 V4.500 Z" fill="#e8e8e8" stroke="#222" stroke-width=".7"/></svg>
<svg width="10" height="12" viewBox="0 0 10 12" style="left:544px;top:665px"><path d="M0.300 0.500 H9.700 L6.300 4.500 V11.500 L3.700 9.500 V4.500 Z" fill="#e8e8e8" stroke="#222" stroke-width=".7"/></svg>
<svg width="10" height="12" viewBox="0 0 10 12" style="left:614px;top:665px"><path d="M0.300 0.500 H9.700 L6.300 4.500 V11.500 L3.700 9.500 V4.500 Z" fill="#e8e8e8" stroke="#222" stroke-width=".7"/></svg>
<div class="a" style="left:238px;top:658px;width:1px;height:27px;background:#8a8a8a"></div><div class="a" style="left:237px;top:658px;width:1px;height:27px;background:#2a2a2a"></div>
<div class="a" style="left:298px;top:658px;width:1px;height:27px;background:#8a8a8a"></div><div class="a" style="left:297px;top:658px;width:1px;height:27px;background:#2a2a2a"></div>
<div class="a" style="left:418px;top:658px;width:1px;height:27px;background:#8a8a8a"></div><div class="a" style="left:417px;top:658px;width:1px;height:27px;background:#2a2a2a"></div>
<div class="a" style="left:488px;top:658px;width:1px;height:27px;background:#8a8a8a"></div><div class="a" style="left:487px;top:658px;width:1px;height:27px;background:#2a2a2a"></div>
<div class="a" style="left:558px;top:658px;width:1px;height:27px;background:#8a8a8a"></div><div class="a" style="left:557px;top:658px;width:1px;height:27px;background:#2a2a2a"></div>
<div class="a" style="left:628px;top:658px;width:1px;height:27px;background:#8a8a8a"></div><div class="a" style="left:627px;top:658px;width:1px;height:27px;background:#2a2a2a"></div>
<div class="a" style="left:169px;top:709px;width:760px;height:1px;background:#c6c6c6"></div>
<span class="t td" style="left:174px;top:691px">1</span>
<span class="t td" style="left:240px;top:691px;width:56px;text-align:right">8.00</span>
<span class="t td sx" style="left:304px;top:691px">ULSF ST(2)(3)</span>
<span class="t td" style="left:424px;top:691px"><b>-1568.1</b></span>
<span class="t td" style="left:494px;top:691px">-42.4</span>
<span class="t td" style="left:564px;top:691px">-679.5</span>
<div class="a" style="left:169px;top:734px;width:760px;height:1px;background:#c6c6c6"></div>
<span class="t td" style="left:174px;top:716px">1</span>
<span class="t td" style="left:240px;top:716px;width:56px;text-align:right">16.00</span>
<span class="t td sx" style="left:304px;top:716px">ULSF ST(3)(7)</span>
<span class="t td" style="left:424px;top:716px"><b>0.4</b></span>
<span class="t td" style="left:494px;top:716px">16.3</span>
<span class="t td" style="left:564px;top:716px">0.0</span>
<div class="a" style="left:169px;top:759px;width:760px;height:1px;background:#c6c6c6"></div>
<span class="t td" style="left:174px;top:741px">1</span>
<span class="t td" style="left:240px;top:741px;width:56px;text-align:right">16.00</span>
<span class="t td sx" style="left:304px;top:741px">ULSF ST(6)(29)</span>
<span class="t td" style="left:424px;top:741px">-9.8</span>
<span class="t td" style="left:494px;top:741px"><b>-382.9</b></span>
<span class="t td" style="left:564px;top:741px">0.0</span>
<div class="a" style="left:169px;top:784px;width:760px;height:1px;background:#c6c6c6"></div>
<span class="t td" style="left:174px;top:766px">1</span>
<span class="t td" style="left:240px;top:766px;width:56px;text-align:right">0.00</span>
<span class="t td sx" style="left:304px;top:766px">ULSF ST(6)(29)</span>
<span class="t td" style="left:424px;top:766px">-9.8</span>
<span class="t td" style="left:494px;top:766px"><b>382.9</b></span>
<span class="t td" style="left:564px;top:766px">0.0</span>
<div class="a" style="left:169px;top:809px;width:760px;height:1px;background:#c6c6c6"></div>
<span class="t td" style="left:174px;top:791px">1</span>
<span class="t td" style="left:240px;top:791px;width:56px;text-align:right">8.00</span>
<span class="t td sx" style="left:304px;top:791px">ULSF ST(4)(16)</span>
<span class="t td" style="left:424px;top:791px">-1443.5</span>
<span class="t td" style="left:494px;top:791px">-42.4</span>
<span class="t td" style="left:564px;top:791px"><b>-735.6</b></span>
<div class="a" style="left:169px;top:834px;width:760px;height:1px;background:#c6c6c6"></div>
<span class="t td" style="left:174px;top:816px">1</span>
<span class="t td" style="left:240px;top:816px;width:56px;text-align:right">8.50</span>
<span class="t td sx" style="left:304px;top:816px">ULSF ST(7)(42)</span>
<span class="t td" style="left:424px;top:816px">-1314.9</span>
<span class="t td" style="left:494px;top:816px">18.5</span>
<span class="t td" style="left:564px;top:816px"><b>806.3</b></span>
<div class="a" style="left:238px;top:685px;width:1px;height:150px;background:#c6c6c6"></div>
<div class="a" style="left:298px;top:685px;width:1px;height:150px;background:#c6c6c6"></div>
<div class="a" style="left:418px;top:685px;width:1px;height:150px;background:#c6c6c6"></div>
<div class="a" style="left:488px;top:685px;width:1px;height:150px;background:#c6c6c6"></div>
<div class="a" style="left:558px;top:685px;width:1px;height:150px;background:#c6c6c6"></div>
<div class="a" style="left:628px;top:685px;width:1px;height:150px;background:#c6c6c6"></div>
<div class="a" style="left:171px;top:685px;width:1px;height:150px;background:#b5b5b5"></div>
<div class="a" style="left:168px;top:944px;width:763px;height:5px;background:#f1f1f1"></div>
<div class="a" style="left:168px;top:954px;width:762px;height:120px;border:1px solid #8c8c8c;background:#fff;overflow:hidden" id="t2">
<div class="a th" style="left:0;top:0;width:741px;height:27px"></div>
<div class="a" style="left:69px;top:0;width:1px;height:27px;background:#8a8a8a"></div><div class="a" style="left:68px;top:0;width:1px;height:27px;background:#2a2a2a"></div>
<span class="t hd" style="left:5px;top:7px;width:63px;overflow:hidden">Combination</span>
<span class="t hd" style="left:75px;top:7px">Critical load effect description</span>
<div class="a" style="left:0;top:51px;width:741px;height:1px;background:#c6c6c6"></div>
<div class="a" style="left:5px;top:33px;width:63px;height:14px;overflow:hidden"><span class="t td sx" style="left:0;top:0">ULSF ST(2)(3)</span></div>
<span class="t td" style="left:75px;top:33px;transform-origin:0 50%;transform:scaleX(0.950)">SW (1) + R (2) + G (2) + PRE (2)</span>
<div class="a" style="left:0;top:76px;width:741px;height:1px;background:#c6c6c6"></div>
<div class="a" style="left:5px;top:58px;width:63px;height:14px;overflow:hidden"><span class="t td sx" style="left:0;top:0">ULSF ST(3)(7)</span></div>
<span class="t td" style="left:75px;top:58px;transform-origin:0 50%;transform:scaleX(0.963)">SW (1) + R (2) + G (2) + PRE (2) + R (3) + 1.35*G (3)</span>
<div class="a" style="left:0;top:101px;width:741px;height:1px;background:#c6c6c6"></div>
<div class="a" style="left:5px;top:83px;width:63px;height:14px;overflow:hidden"><span class="t td sx" style="left:0;top:0">ULSF ST(6)(29)</span></div>
<span class="t td" style="left:75px;top:83px;transform-origin:0 50%;transform:scaleX(0.984)">1.15*SW (1) + R (2) + 1.15*G (2) + PRE (2) + R (3) + G (3) + R (4) + 1.15*G (4) + R (5) + 1.15*G (5) + R (6) + 1.15*G (6) + 1.5*Q</span>
<div class="a" style="left:0;top:126px;width:741px;height:1px;background:#c6c6c6"></div>
<div class="a" style="left:5px;top:108px;width:63px;height:14px;overflow:hidden"><span class="t td sx" style="left:0;top:0">ULSF ST(4)(16)</span></div>
<span class="t td" style="left:75px;top:108px;transform-origin:0 50%;transform:scaleX(0.970)">SW (1) + R (2) + G (2) + PRE (2) + R (3) + 1.35*G (3) + R (4) + 1.35*G (4)</span>
<div class="a" style="left:69px;top:27px;width:1px;height:100px;background:#c6c6c6"></div>
<div class="a" style="left:2px;top:27px;width:1px;height:100px;background:#b5b5b5"></div>
<div class="a" style="left:741px;top:0;width:19px;height:122px;background:#f0f0f0;border-left:1px solid #e3e3e3"></div>
<div class="a sb" style="left:743px;top:2px;width:16px;height:16px"></div><div class="a sb" style="left:743px;top:18px;width:16px;height:60px;background:linear-gradient(90deg,#ececec,#d6d6d6 50%,#c6c6c6)"></div><div class="a sb" style="left:743px;top:101px;width:16px;height:16px"></div>
<svg width="8" height="5" viewBox="0 0 8 5" style="left:747px;top:8px"><path d="M0 4.500 H8 L4 0 Z" fill="#333"/></svg><svg width="8" height="5" viewBox="0 0 8 5" style="left:747px;top:107px"><path d="M0 0.500 H8 L4 5 Z" fill="#333"/></svg>
</div>
<!--DATA-END-->
</div>
</body>
</html>
